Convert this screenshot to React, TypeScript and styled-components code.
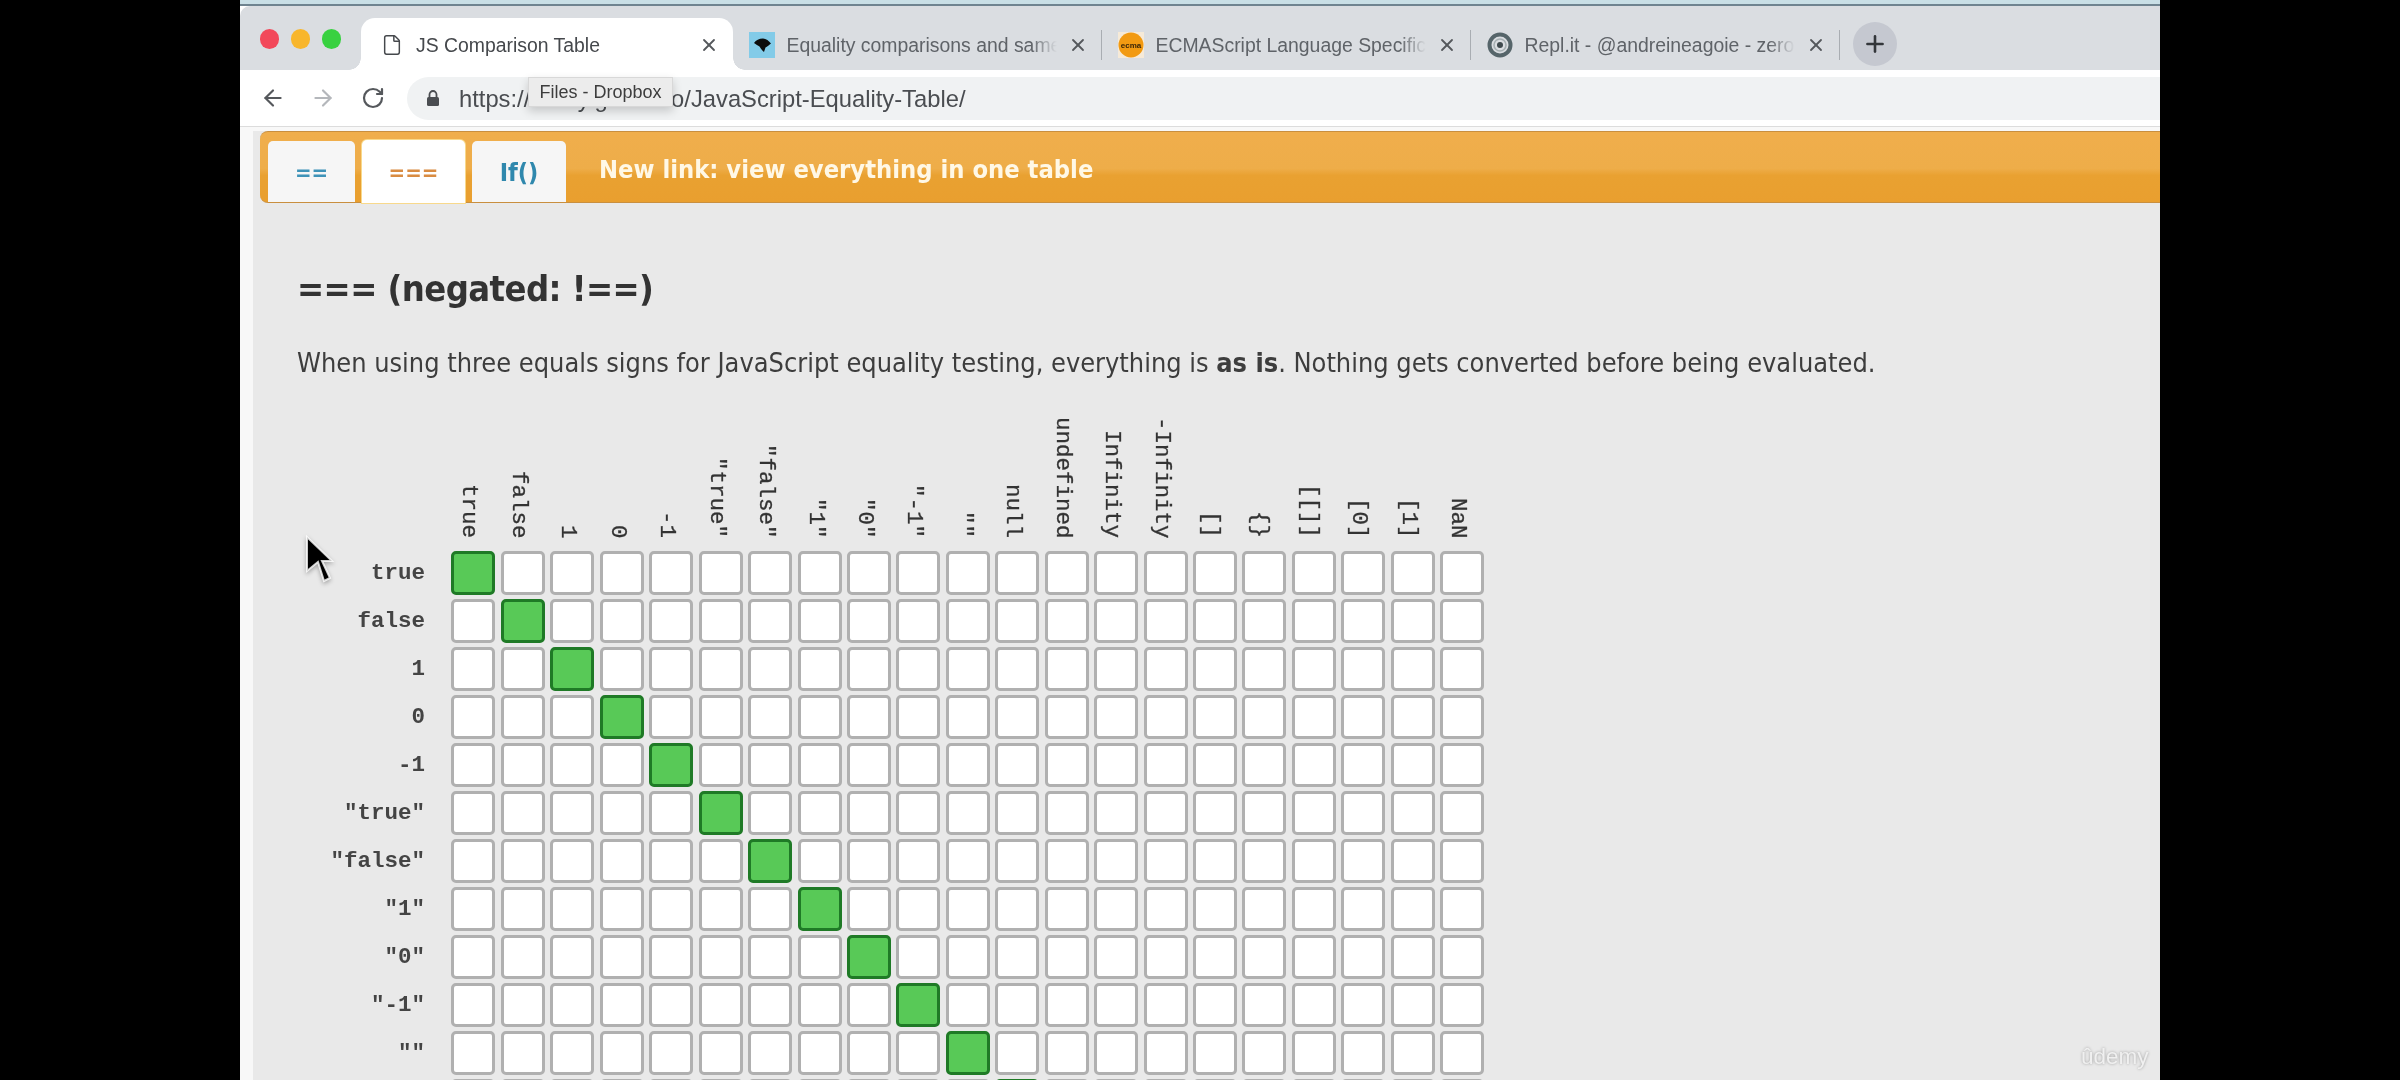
import React from "react";
import styled, { createGlobalStyle } from "styled-components";
import { ArrowLeft, ArrowRight, RotateCw, File, X, Plus } from "lucide-react";

const Global = createGlobalStyle`
  html, body { margin: 0; padding: 0; background: #000; overflow: hidden; }
  #root { width: 2400px; height: 1080px; }
`;

const Stage = styled.div`
  width: 2400px;
  height: 1080px;
  background: #000;
  display: flex;
  justify-content: flex-start;
  overflow: hidden;
  padding-left: 240px;
  box-sizing: border-box;
`;

const Screen = styled.div`
  position: relative;
  width: 1920px;
  height: 1080px;
  overflow: hidden;
  display: flex;
  flex-direction: column;
  background: #fff;
  filter: blur(0.7px);
  font-family: "Liberation Sans", Arial, sans-serif;
`;

const DesktopStrip = styled.div`
  height: 6px;
  flex: none;
  background: #6f8490;
  border-top: 4px solid #c9dfe6;
  box-sizing: border-box;
`;

const TabBar = styled.div`
  height: 64px;
  flex: none;
  display: flex;
  align-items: flex-end;
  background: #dadde1;
  border-top-left-radius: 10px;
`;

const Traffic = styled.div`
  width: 124px;
  flex: none;
  align-self: stretch;
  display: flex;
  align-items: center;
  gap: 11.5px;
  padding: 2px 0 0 19.5px;
  box-sizing: border-box;
`;

const Dot = styled.span<{ $c: string }>`
  width: 19.5px;
  height: 19.5px;
  border-radius: 50%;
  background: ${(p) => p.$c};
`;

const Tab = styled.div<{ $active?: boolean; $sep?: boolean }>`
  position: relative;
  width: ${(p) => (p.$active ? 372 : 369)}px;
  margin-left: ${(p) => (p.$active ? -3 : 0)}px;
  height: 52px;
  flex: none;
  box-sizing: border-box;
  display: flex;
  align-items: center;
  gap: ${(p) => (p.$active ? 11 : 11.5)}px;
  padding: 1px 14px 0 ${(p) => (p.$active ? 18 : 16)}px;
  border-radius: 14px 14px 0 0;
  background: ${(p) => (p.$active ? "#fff" : "transparent")};
  color: ${(p) => (p.$active ? "#45484c" : "#5f6368")};

  &::after {
    content: "";
    display: ${(p) => (p.$sep ? "block" : "none")};
    position: absolute;
    right: 0;
    top: 12px;
    height: 30px;
    width: 1px;
    background: #a9adb2;
  }
`;

const TabFlare = styled.span<{ $side: "left" | "right" }>`
  position: absolute;
  bottom: 0;
  ${(p) => p.$side}: -12px;
  width: 12px;
  height: 12px;
  background: radial-gradient(
    circle at ${(p) => (p.$side === "left" ? "0 0" : "100% 0")},
    transparent 11.5px,
    #fff 12px
  );
`;

const Fav = styled.span`
  width: 26px;
  height: 26px;
  flex: none;
  display: flex;
  align-items: center;
  justify-content: center;
`;

const TabTitle = styled.span<{ $fade?: boolean }>`
  flex: 1;
  min-width: 0;
  white-space: nowrap;
  overflow: hidden;
  font-size: 19.4px;
  line-height: 26px;
  -webkit-mask-image: ${(p) =>
    p.$fade ? "linear-gradient(90deg, #000 calc(100% - 26px), transparent 100%)" : "none"};
  mask-image: ${(p) =>
    p.$fade ? "linear-gradient(90deg, #000 calc(100% - 26px), transparent 100%)" : "none"};
`;

const CloseBtn = styled.span`
  width: 20px;
  height: 20px;
  flex: none;
  display: flex;
  align-items: center;
  justify-content: center;
  color: #55585c;
`;

const NewTab = styled.div`
  width: 44px;
  height: 44px;
  flex: none;
  margin: 0 0 4px 13px;
  border-radius: 50%;
  background: #c5c8d0;
  color: #33363a;
  display: flex;
  align-items: center;
  justify-content: center;
`;

const Toolbar = styled.div`
  height: 57px;
  flex: none;
  display: flex;
  align-items: center;
  box-sizing: border-box;
  padding: 0 0 0 20px;
  background: #fff;
  border-bottom: 1px solid #dcdcdc;
`;

const NavBtn = styled.span<{ $dim?: boolean }>`
  width: 26px;
  height: 26px;
  flex: none;
  margin-right: 24px;
  display: flex;
  align-items: center;
  justify-content: center;
  color: ${(p) => (p.$dim ? "#b4b7bb" : "#55585c")};
`;

const UrlPill = styled.div`
  flex: 1;
  height: 43px;
  margin-left: -3px;
  display: flex;
  align-items: center;
  gap: 19px;
  padding-left: 19px;
  background: #f0f2f3;
  border-radius: 22px 0 0 22px;
`;

const UrlText = styled.span`
  font-size: 23.75px;
  line-height: 28px;
  padding-top: 2px;
  color: #4a4d51;
  white-space: nowrap;
`;

const Tooltip = styled.div`
  position: absolute;
  left: 288px;
  top: 77px;
  width: 145px;
  height: 30px;
  box-sizing: border-box;
  display: flex;
  align-items: center;
  justify-content: center;
  background: #ececec;
  border: 1px solid #d8d8d8;
  box-shadow: 0 4px 10px rgba(0, 0, 0, 0.18);
  font-size: 18px;
  color: #3d3d3d;
`;

const Page = styled.div`
  flex: 1;
  min-height: 0;
  background: #f8f8f8;
  padding: 4px 0 0 13px;
`;

const Content = styled.div`
  height: 100%;
  background: #e9e9e9;
  padding-left: 7px;
`;

const OrangeBar = styled.div`
  height: 72px;
  display: flex;
  align-items: flex-end;
  box-sizing: border-box;
  padding-left: 8px;
  border-radius: 8px 0 0 8px;
  border-top: 1px solid #c98f3f;
  border-bottom: 1px solid #c98f3f;
  background: linear-gradient(180deg, #f0ae4c 0%, #eead49 52%, #e9a131 62%, #e99f2f 100%);
`;

const BarTab = styled.div<{ $w: number; $size: number; $active?: boolean; $c: string }>`
  width: ${(p) => p.$w}px;
  height: ${(p) => (p.$active ? 63 : 61)}px;
  margin-right: 7px;
  margin-bottom: ${(p) => (p.$active ? -1 : 0)}px;
  box-sizing: border-box;
  display: flex;
  align-items: center;
  justify-content: center;
  padding-top: 1px;
  border-radius: 5px 5px 0 0;
  background: ${(p) => (p.$active ? "#fff" : "#f6f6f6")};
  box-shadow: ${(p) => (p.$active ? "0 0 0 1px #f8d98c" : "none")};
  color: ${(p) => p.$c};
  font-family: "DejaVu Sans Condensed", "DejaVu Sans", sans-serif;
  font-weight: 700;
  font-size: ${(p) => p.$size}px;
`;

const BarLink = styled.div`
  align-self: center;
  margin-left: 26px;
  padding-top: 5px;
  color: #fff8e6;
  font-family: "DejaVu Sans Condensed", "DejaVu Sans", sans-serif;
  font-weight: 700;
  font-size: 25.3px;
  white-space: nowrap;
`;

const Heading = styled.h1`
  margin: 63.5px 0 0 37px;
  font-family: "DejaVu Sans Condensed", "DejaVu Sans", sans-serif;
  font-weight: 700;
  font-size: 36px;
  letter-spacing: -0.55px;
  line-height: 44px;
  color: #333;
`;

const Para = styled.p`
  margin: 35px 0 0 37px;
  font-family: "DejaVu Sans Condensed", "DejaVu Sans", sans-serif;
  font-size: 26.9px;
  line-height: 34px;
  color: #3d3d3d;
  white-space: nowrap;

  b {
    font-weight: 700;
  }
`;

const Grid = styled.div`
  margin: 30px 0 0 37px;
  display: grid;
  grid-template-columns: 149px repeat(21, 44px);
  grid-auto-rows: 44px;
  grid-template-rows: 137px;
  column-gap: 5.45px;
  row-gap: 4px;
`;

const ColHead = styled.div`
  justify-self: center;
  align-self: end;
  margin: 0 8px 8px 0;
  writing-mode: vertical-rl;
  font-family: "Liberation Mono", "Courier New", monospace;
  font-size: 22.5px;
  line-height: 18px;
  color: #333;
  -webkit-text-stroke: 0.3px #333;
  white-space: pre;
`;

const RowHead = styled.div`
  display: flex;
  align-items: center;
  justify-content: flex-end;
  padding-right: 21px;
  font-family: "Liberation Mono", "Courier New", monospace;
  font-weight: 700;
  font-size: 22.5px;
  color: #444;
  white-space: pre;
`;

const Cell = styled.div<{ $on?: boolean }>`
  box-sizing: border-box;
  border-radius: 5px;
  border: 3px solid ${(p) => (p.$on ? "#1f7a26" : "#b0b0b0")};
  background: ${(p) => (p.$on ? "#58c957" : "#fff")};
`;

const Cursor = styled.svg`
  position: absolute;
  left: 60px;
  top: 530px;
  width: 44px;
  height: 62px;
`;

const Watermark = styled.div`
  position: absolute;
  left: 1841px;
  top: 1043px;
  font-size: 22.5px;
  line-height: 28px;
  color: #f0f0f0;
  text-shadow: 0 0 3px rgba(0, 0, 0, 0.35);
`;

const EcmaLabel = styled.text`
  font-family: "Liberation Sans", sans-serif;
  font-weight: 700;
  font-size: 8px;
  fill: #3a2508;
`;

const cols = [
  "true", "false", "1", "0", "-1", '"true"', '"false"', '"1"', '"0"', '"-1"', '""',
  "null", "undefined", "Infinity", "-Infinity", "[]", "{}", "[[]]", "[0]", "[1]", "NaN",
];
const rows = cols.slice(0, 12);

const MdnIcon = () => (
  <svg width="26" height="26" viewBox="0 0 26 26">
    <rect width="26" height="26" fill="#83cbe8" />
    <path d="M5 11 C7 8 10 6.5 14 6.5 C17 6.5 20 9 22 11.5 C20.5 13 18 14.5 16.5 15.5 L15 20 C13.5 19 12 17 10.5 14.5 C9 13.5 7 12.5 5 11 Z" fill="#0c0c0c" />
  </svg>
);

const EcmaIcon = () => (
  <svg width="26" height="26" viewBox="0 0 26 26">
    <rect width="26" height="26" fill="#f6ead8" />
    <circle cx="13" cy="13" r="12.5" fill="#f29a12" />
    <EcmaLabel x="13" y="16" textAnchor="middle">ecma</EcmaLabel>
  </svg>
);

const ReplIcon = () => (
  <svg width="26" height="26" viewBox="0 0 26 26" fill="none">
    <circle cx="13" cy="13" r="10.5" stroke="#56656a" strokeWidth="4" />
    <circle cx="13" cy="13" r="6" stroke="#a7b0b3" strokeWidth="1.6" />
    <circle cx="13" cy="13" r="3" fill="#3f4a4e" />
  </svg>
);

const LockIcon = () => (
  <svg width="14" height="18" viewBox="0 0 14 18" style={{ flex: "none" }}>
    <path d="M3.5 8V5.5a3.5 3.5 0 0 1 7 0V8" fill="none" stroke="#4a4d51" strokeWidth="1.8" />
    <rect x="1" y="8" width="12" height="9" rx="1.5" fill="#4a4d51" />
  </svg>
);

export default function App() {
  return (
    <Stage>
      <Global />
      <Screen>
        <DesktopStrip />
        <TabBar>
          <Traffic>
            <Dot $c="#f2485a" />
            <Dot $c="#f8b62c" />
            <Dot $c="#38d140" />
          </Traffic>
          <Tab $active>
            <TabFlare $side="left" />
            <TabFlare $side="right" />
            <Fav>
              <File size={22} strokeWidth={1.6} />
            </Fav>
            <TabTitle>JS Comparison Table</TabTitle>
            <CloseBtn>
              <X size={20} strokeWidth={2.2} />
            </CloseBtn>
          </Tab>
          <Tab $sep>
            <Fav>
              <MdnIcon />
            </Fav>
            <TabTitle $fade>Equality comparisons and same-value equality</TabTitle>
            <CloseBtn>
              <X size={20} strokeWidth={2.2} />
            </CloseBtn>
          </Tab>
          <Tab $sep>
            <Fav>
              <EcmaIcon />
            </Fav>
            <TabTitle $fade>ECMAScript Language Specification</TabTitle>
            <CloseBtn>
              <X size={20} strokeWidth={2.2} />
            </CloseBtn>
          </Tab>
          <Tab $sep>
            <Fav>
              <ReplIcon />
            </Fav>
            <TabTitle $fade>Repl.it - @andreineagoie - zero to mastery</TabTitle>
            <CloseBtn>
              <X size={20} strokeWidth={2.2} />
            </CloseBtn>
          </Tab>
          <NewTab>
            <Plus size={26} strokeWidth={2.4} />
          </NewTab>
        </TabBar>
        <Toolbar>
          <NavBtn>
            <ArrowLeft size={26} strokeWidth={2} />
          </NavBtn>
          <NavBtn $dim>
            <ArrowRight size={26} strokeWidth={2} />
          </NavBtn>
          <NavBtn>
            <RotateCw size={24} strokeWidth={2.2} />
          </NavBtn>
          <UrlPill>
            <LockIcon />
            <UrlText>https://dorey.github.io/JavaScript-Equality-Table/</UrlText>
          </UrlPill>
        </Toolbar>
        <Page>
          <Content>
            <OrangeBar>
              <BarTab $w={87} $size={22} $c="#3f93b8">==</BarTab>
              <BarTab $w={103} $size={22} $active $c="#d98c42">===</BarTab>
              <BarTab $w={94} $size={25} $c="#2f88ad">If()</BarTab>
              <BarLink>New link: view everything in one table</BarLink>
            </OrangeBar>
            <Heading>=== (negated: !==)</Heading>
            <Para>
              When using three equals signs for JavaScript equality testing, everything is <b>as is</b>. Nothing gets converted before being evaluated.
            </Para>
            <Grid>
              <div />
              {cols.map((c) => (
                <ColHead key={c}>{c}</ColHead>
              ))}
              {rows.map((r, ri) => (
                <React.Fragment key={r}>
                  <RowHead>{r}</RowHead>
                  {cols.map((c, ci) => (
                    <Cell key={c} $on={ci === ri} />
                  ))}
                </React.Fragment>
              ))}
            </Grid>
          </Content>
        </Page>
        <Tooltip>Files - Dropbox</Tooltip>
        <Cursor viewBox="-7 -7 44 62">
          <path
            d="M0 0 L0 34 L11 25 L17 44 L23 41 L15 24 L25 24 Z"
            fill="#000"
            stroke="#fff"
            strokeWidth="2"
            strokeOpacity="0.8"
            style={{ filter: "drop-shadow(0 2px 2px rgba(0,0,0,.3))" }}
          />
        </Cursor>
        <Watermark>ûdemy</Watermark>
      </Screen>
    </Stage>
  );
}
